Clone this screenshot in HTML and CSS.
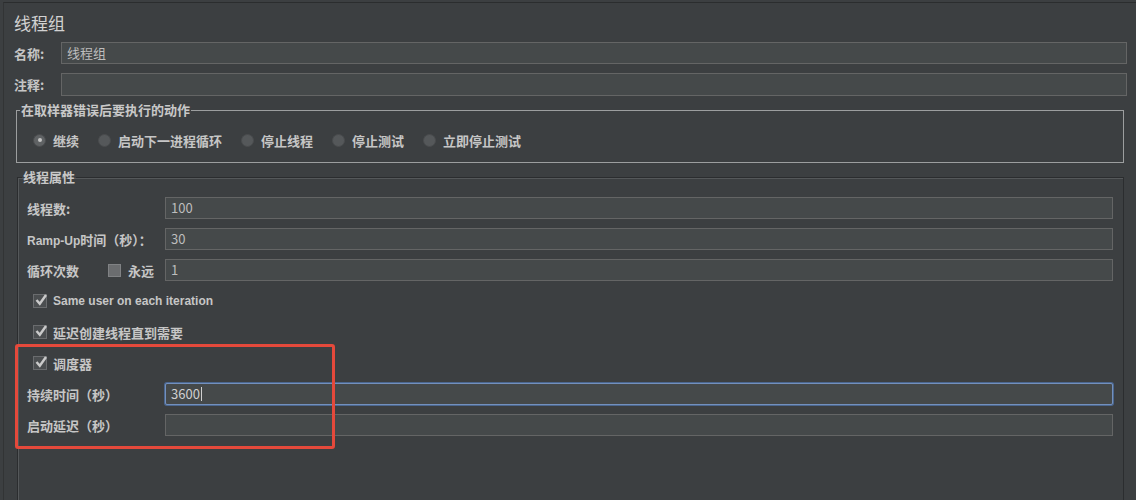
FILE: index.html
```html
<!DOCTYPE html>
<html lang="zh">
<head>
<meta charset="utf-8">
<link rel="stylesheet" href="styles.css">
</head>
<body>
<div class="frame">
  <div class="title">线程组</div>
  <div class="row top-row">
    <span class="lbl lbl-top">名称:</span>
    <div class="field">线程组</div>
  </div>
  <div class="row top-row gap9">
    <span class="lbl lbl-top">注释:</span>
    <div class="field"></div>
  </div>

  <fieldset class="group group-err">
    <legend>在取样器错误后要执行的动作</legend>
    <div class="radios">
      <label class="radio"><span class="dot on"></span>继续</label>
      <label class="radio"><span class="dot"></span>启动下一进程循环</label>
      <label class="radio"><span class="dot"></span>停止线程</label>
      <label class="radio"><span class="dot"></span>停止测试</label>
      <label class="radio"><span class="dot"></span>立即停止测试</label>
    </div>
  </fieldset>

  <fieldset class="group group-props">
    <legend>线程属性</legend>
    <div class="props">
      <div class="prow">
        <span class="plbl">线程数:</span>
        <div class="field">100</div>
      </div>
      <div class="prow">
        <span class="plbl"><span class="latin">Ramp-Up</span>时间（秒）：</span>
        <div class="field">30</div>
      </div>
      <div class="prow">
        <span class="plbl loop"><span>循环次数</span><span class="forever"><span class="box plain"></span>永远</span></span>
        <div class="field">1</div>
      </div>
      <div class="prow check">
        <span class="box"><svg viewBox="0 0 14 14" width="14" height="14"><path d="M2.5 7 L5.8 10.8 L12 2" fill="none" stroke="#cacaca" stroke-width="2.4"/></svg></span>
        <span class="latin">Same user on each iteration</span>
      </div>
      <div class="prow check">
        <span class="box"><svg viewBox="0 0 14 14" width="14" height="14"><path d="M2.5 7 L5.8 10.8 L12 2" fill="none" stroke="#cacaca" stroke-width="2.4"/></svg></span>
        <span>延迟创建线程直到需要</span>
      </div>
      <div class="prow check">
        <span class="box"><svg viewBox="0 0 14 14" width="14" height="14"><path d="M2.5 7 L5.8 10.8 L12 2" fill="none" stroke="#cacaca" stroke-width="2.4"/></svg></span>
        <span>调度器</span>
      </div>
      <div class="prow">
        <span class="plbl">持续时间（秒）</span>
        <div class="field focus">3600<span class="caret"></span></div>
      </div>
      <div class="prow">
        <span class="plbl">启动延迟（秒）</span>
        <div class="field"></div>
      </div>
    </div>
  </fieldset>
</div>
<div class="annot"></div>
</body>
</html>
```

FILE: styles.css
```css
html, body {
  margin: 0;
  padding: 0;
}
body {
  width: 1136px;
  height: 500px;
  overflow: hidden;
  background: #3c3f41;
  font-family: "Noto Sans CJK SC", "Liberation Sans", sans-serif;
  color: #c6c6c6;
  position: relative;
}
.frame {
  margin-top: 2px;
  margin-left: 3px;
  border-top: 1px solid #2b2d2e;
  border-left: 1px solid #323435;
  height: 497px;
  overflow: hidden;
}
.title {
  margin-top: 9px;
  height: 22px;
  line-height: 22px;
  padding-left: 10px;
  font-size: 17px;
  color: #d2d2d2;
}
.row {
  display: flex;
  align-items: center;
  height: 22px;
}
.top-row {
  margin-top: 8px;
  padding-left: 10px;
  padding-right: 9px;
}
.top-row.gap9 {
  margin-top: 9px;
  height: 23px;
}
.lbl-top {
  width: 47px;
  font-size: 13px;
  font-weight: 700;
  flex: none;
}
.field {
  flex: 1;
  height: 100%;
  box-sizing: border-box;
  background: #45494a;
  border: 1px solid #646565;
  font-size: 13px;
  font-weight: 400;
  line-height: 20px;
  padding-left: 5px;
  color: #bdbdbd;
  display: flex;
  align-items: center;
}
.group {
  margin: 0;
  padding: 0;
  border: 1px solid #9c9e9f;
  min-width: 0;
}
.group legend {
  font-size: 13px;
  font-weight: 700;
  line-height: 16px;
  padding: 0 1px;
  margin-left: 3px;
  color: #c8c8c8;
}
.group-err {
  margin: 6px 12px 0 12px;
}
.radios {
  display: flex;
  align-items: center;
  height: 16px;
  padding: 14px 0 14px 16px;
  gap: 19px;
  font-size: 13px;
  font-weight: 700;
}
.radio {
  display: flex;
  align-items: center;
  gap: 7px;
}
.dot {
  width: 13px;
  height: 13px;
  box-sizing: border-box;
  border-radius: 50%;
  background: #55585a;
  border: 1px solid #4a4c4e;
  position: relative;
}
.dot.on {
  background: #5f6264;
}
.dot.on::after {
  content: "";
  position: absolute;
  left: 3.5px;
  top: 3.5px;
  width: 4px;
  height: 4px;
  border-radius: 50%;
  background: #c4c4c4;
}
.group-props {
  margin: 6px 12px 0 13px;
  border: 1px solid #2b2d2f;
  box-shadow: inset 1px 1px 0 #55585a;
  height: 400px;
}
.group-props legend {
  margin-left: 4px;
}
.props {
  padding: 12px 10px 0 9px;
  display: flex;
  flex-direction: column;
  gap: 9px;
}
.prow {
  display: flex;
  align-items: center;
  height: 22px;
  font-size: 13px;
  font-weight: 700;
}
.plbl {
  width: 138px;
  flex: none;
}
.latin {
  font-family: "Liberation Sans", sans-serif;
  font-size: 12px;
}
.loop {
  display: flex;
  align-items: center;
}
.forever {
  display: flex;
  align-items: center;
  gap: 7px;
  margin-left: 29px;
}
.box {
  width: 14px;
  height: 14px;
  flex: none;
  box-sizing: border-box;
  background: #4b4e50;
  border: 1px solid #6a6c6e;
  position: relative;
}
.box svg {
  position: absolute;
  left: 0;
  top: -2px;
}
.box.plain {
  width: 13px;
  height: 13px;
  background: #6b6d6f;
  border: 1px solid #808284;
}
.check {
  padding-left: 6px;
  gap: 6px;
}
.field.focus {
  border: 1px solid #7390bd;
  border-radius: 2px;
  box-shadow: 0 0 0 1px #4b6790;
  color: #d0d0d0;
}
.caret {
  display: inline-block;
  width: 1px;
  height: 14px;
  background: #d0d0d0;
  margin-left: 1px;
}
.annot {
  position: absolute;
  left: 15px;
  top: 344px;
  width: 320px;
  height: 105px;
  box-sizing: border-box;
  border: 3px solid #e5493b;
  border-radius: 3px;
}
```
